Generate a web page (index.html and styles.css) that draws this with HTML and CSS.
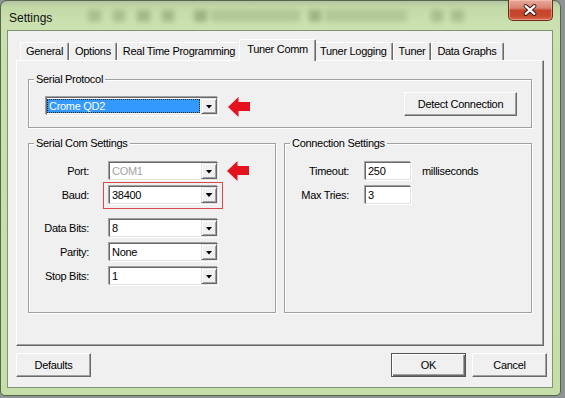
FILE: index.html
```html
<!DOCTYPE html>
<html>
<head>
<meta charset="utf-8">
<link rel="stylesheet" href="styles.css">
</head>
<body>
<div class="window">
  <div class="titlebar">
    <span class="title">Settings</span>
    <div class="glass"></div>
    <div class="close">
      <svg width="45" height="21" viewBox="0 0 45 21">
        <path d="M18 7 L27 15 M27 7 L18 15" stroke="#3b1810" stroke-width="4.2" stroke-linecap="round" fill="none"/>
        <path d="M18 7 L27 15 M27 7 L18 15" stroke="#ffffff" stroke-width="2.2" stroke-linecap="round" fill="none"/>
      </svg>
    </div>
  </div>
  <div class="client">
    <div class="tabs">
      <div class="tab">General</div>
      <div class="tab">Options</div>
      <div class="tab">Real Time Programming</div>
      <div class="tab active">Tuner Comm</div>
      <div class="tab">Tuner Logging</div>
      <div class="tab">Tuner</div>
      <div class="tab last">Data Graphs</div>
    </div>
    <div class="panel">
      <fieldset class="group">
        <legend>Serial Protocol</legend>
        <div class="proto-row">
          <div class="combo wide top">
            <span class="combo-text sel">Crome QD2</span>
            <span class="drop"></span>
          </div>
          <svg class="arrow top" width="22" height="20" viewBox="0 0 22 20"><path d="M0 10 L10.5 0 L10.5 5 L22 5 L22 14 L10.5 14 L10.5 20 Z" fill="#e3121c"/></svg>
          <button class="btn detect">Detect Connection</button>
        </div>
      </fieldset>
      <div class="groups">
        <fieldset class="group serial">
          <legend>Serial Com Settings</legend>
          <div class="fields">
            <div class="row">
              <span class="lbl">Port:</span>
              <div class="combo field disabled"><span class="combo-text">COM1</span><span class="drop"></span></div>
              <svg class="arrow" width="22" height="20" viewBox="0 0 22 20"><path d="M0 10 L10.5 0 L10.5 5 L22 5 L22 14 L10.5 14 L10.5 20 Z" fill="#e3121c"/></svg>
            </div>
            <div class="row">
              <span class="lbl">Baud:</span>
              <div class="mark">
                <div class="combo"><span class="combo-text">38400</span><span class="drop"></span></div>
              </div>
            </div>
            <div class="row gap">
              <span class="lbl">Data Bits:</span>
              <div class="combo field"><span class="combo-text">8</span><span class="drop"></span></div>
            </div>
            <div class="row">
              <span class="lbl">Parity:</span>
              <div class="combo field"><span class="combo-text">None</span><span class="drop"></span></div>
            </div>
            <div class="row">
              <span class="lbl">Stop Bits:</span>
              <div class="combo field"><span class="combo-text">1</span><span class="drop"></span></div>
            </div>
          </div>
        </fieldset>
        <fieldset class="group conn">
          <legend>Connection Settings</legend>
          <div class="fields">
            <div class="row">
              <span class="lbl lbl-conn">Timeout:</span>
              <div class="input">250</div>
              <span class="unit">milliseconds</span>
            </div>
            <div class="row">
              <span class="lbl lbl-conn">Max Tries:</span>
              <div class="input">3</div>
            </div>
          </div>
        </fieldset>
      </div>
    </div>
    <div class="buttons">
      <button class="btn">Defaults</button>
      <button class="btn ok">OK</button>
      <button class="btn">Cancel</button>
    </div>
  </div>
</div>
</body>
</html>
```
FILE: styles.css
```css
* { box-sizing: border-box; }

body {
  margin: 0;
  width: 565px;
  height: 398px;
  overflow: hidden;
  background: #8e9393;
  font-family: "Liberation Sans", Arial, sans-serif;
  font-size: 11px;
  letter-spacing: -0.3px;
  color: #000;
}

.window {
  width: 561px;
  height: 396px;
  border: 1px solid #56674d;
  border-radius: 7px 7px 5px 5px;
  background: linear-gradient(#b4c3a4 0px, #c3d9a6 6px, #cbe1b0 22px, #c9e0ad 60px, #c6dea8 100%);
  padding: 0 7px 7px 6px;
  display: flex;
  flex-direction: column;
}

.titlebar {
  height: 29px;
  display: flex;
  align-items: flex-start;
}

.title {
  font-size: 12px;
  letter-spacing: 0;
  line-height: 14px;
  margin-top: 10px;
  margin-left: 2px;
  color: #111;
}

.glass {
  flex: 1;
  height: 12px;
  margin: 9px 28px 0 20px;
  filter: blur(2.5px);
  opacity: 0.35;
  background: linear-gradient(90deg,
    transparent 0, transparent 4%,
    #6f8c55 4%, #6f8c55 7%, transparent 7%, transparent 10%,
    #6f8c55 10%, #6f8c55 13%, transparent 13%, transparent 16%,
    #5e7a47 16%, #5e7a47 19%, transparent 19%, transparent 22%,
    #5e7a47 22%, #5e7a47 25%, transparent 25%, transparent 30%,
    #4f6a3a 30%, #4f6a3a 33%, transparent 33%, transparent 34%,
    #8aa56f 34%, #8aa56f 56%, transparent 56%, transparent 58%,
    #4f6a3a 58%, #4f6a3a 61%, transparent 61%, transparent 62%,
    #8aa56f 62%, #8aa56f 82%, transparent 82%, transparent 88%,
    #6f8c55 88%, #6f8c55 91%, transparent 91%, transparent 93%,
    #6f8c55 93%, #6f8c55 96%, transparent 96%);
}

.close {
  margin-top: -1px;
  width: 45px;
  height: 21px;
  border: 1px solid #6b2a1e;
  border-top: none;
  border-radius: 0 0 5px 5px;
  background: linear-gradient(#e8aa9c 0%, #d98270 40%, #c4442d 52%, #c8492f 80%, #d8694c 100%);
  box-shadow: inset 0 0 0 1px rgba(255, 210, 190, 0.45);
  display: flex;
}

.close svg { display: block; margin: -1px 0 0 -1px; }

.client {
  flex: 1;
  background: #f0f0f0;
  border: 1px solid #7f9576;
  padding: 8px 8px 0 8px;
  display: flex;
  flex-direction: column;
}

.tabs {
  display: flex;
  align-items: flex-end;
  height: 21px;
  padding-left: 4px;
}

.tab {
  height: 18px;
  line-height: 17px;
  padding: 0 5px;
  white-space: nowrap;
  border: 1px solid;
  border-bottom: none;
  border-color: #ffffff #696969 transparent #ffffff;
  box-shadow: inset -1px 0 0 #a0a0a0;
  border-radius: 2px 2px 0 0;
}

.tab.last { padding-right: 7px; }

.tab.active {
  position: relative;
  z-index: 1;
  height: 22px;
  line-height: 19px;
  margin: 0 -2px -1px -2px;
  padding: 0 7px;
  background: #f0f0f0;
}

.panel {
  height: 286px;
  border: 1px solid;
  border-color: #ffffff #696969 #696969 #ffffff;
  box-shadow: inset -1px -1px 0 #a0a0a0;
  padding: 12px 11px 0 11px;
}

fieldset.group {
  margin: 0;
  padding: 0;
  min-inline-size: 0;
  border: 1px solid #a0a0a0;
  box-shadow: inset 1px 1px 0 #fff, 1px 1px 0 #fff;
}

legend {
  margin-left: 5px;
  padding: 0 2px;
  line-height: 13px;
  background: #f0f0f0;
}

.proto-row {
  display: flex;
  align-items: flex-start;
  padding: 6px 14px 10px 16px;
}

.top { margin-top: 5px; }

.combo {
  display: flex;
  width: 109px;
  height: 18px;
  margin: 1px;
  background: #fff;
  border: 1px solid;
  border-color: #696969 #e3e3e3 #e3e3e3 #696969;
  box-shadow: -1px -1px 0 #a0a0a0, 1px 1px 0 #fff;
}

.combo.wide { width: 172px; }
.combo.top { margin-top: 5px; }
.combo.field { margin-left: 20px; }

.combo-text {
  flex: 1;
  line-height: 16px;
  padding-left: 2px;
  white-space: nowrap;
}

.combo-text.sel {
  margin: 1px 1px 1px 0;
  line-height: 12px;
  padding-left: 1px;
  background: #3399ff;
  color: #fff;
  border: 1px dotted #222;
}

.combo.disabled .combo-text { color: #a3a3a3; }

.drop {
  width: 16px;
  height: 16px;
  flex: none;
  background: #f0f0f0;
  border: 1px solid;
  border-color: #e3e3e3 #696969 #696969 #e3e3e3;
  box-shadow: inset 1px 1px 0 #fff, inset -1px -1px 0 #a0a0a0;
  display: flex;
  align-items: center;
  justify-content: center;
}

.drop::after {
  content: "";
  width: 7px;
  height: 4px;
  margin-top: 1px;
  background: #000;
  clip-path: polygon(0 0, 100% 0, 50% 100%);
}

.arrow { display: block; flex: none; margin-left: 8px; }
.proto-row .arrow { margin-left: 9px; }

.btn {
  font: inherit;
  letter-spacing: inherit;
  color: #000;
  width: 75px;
  height: 24px;
  padding: 0;
  background: #f0f0f0;
  border: 1px solid;
  border-color: #ffffff #696969 #696969 #ffffff;
  box-shadow: inset -1px -1px 0 #a0a0a0;
  border-radius: 0;
}

.btn.detect {
  width: 113px;
  margin-left: auto;
}

.btn.ok {
  margin-left: auto;
  border-color: #555;
  box-shadow: inset 1px 1px 0 #fff, inset -1px -1px 0 #696969, inset -2px -2px 0 #a0a0a0;
}

.btn + .btn:not(.ok) { margin-left: 6px; }

.groups {
  display: flex;
  gap: 8px;
  margin-top: 9px;
}

.groups fieldset.group { height: 176px; }
.groups .serial { width: 248px; flex: none; }
.groups .conn { flex: 1; }

.fields { padding-top: 11px; }

.row {
  display: flex;
  align-items: center;
  height: 20px;
}

.row + .row { margin-top: 4px; }
.row.gap { margin-top: 13px; }

.lbl {
  width: 60px;
  flex: none;
  text-align: right;
  white-space: nowrap;
}

.lbl-conn { width: 64px; }

.mark {
  display: flex;
  margin-left: 14px;
  padding: 2px 3px 3px 4px;
  border: 1px solid #d84a4a;
}

.input {
  width: 46px;
  height: 18px;
  margin-left: 16px;
  line-height: 16px;
  padding-left: 2px;
  background: #fff;
  border: 1px solid;
  border-color: #696969 #e3e3e3 #e3e3e3 #696969;
  box-shadow: -1px -1px 0 #a0a0a0, 1px 1px 0 #fff;
}

.unit { margin-left: 11px; }

.buttons {
  display: flex;
  margin-top: 7px;
  margin-right: -3px;
}
```
